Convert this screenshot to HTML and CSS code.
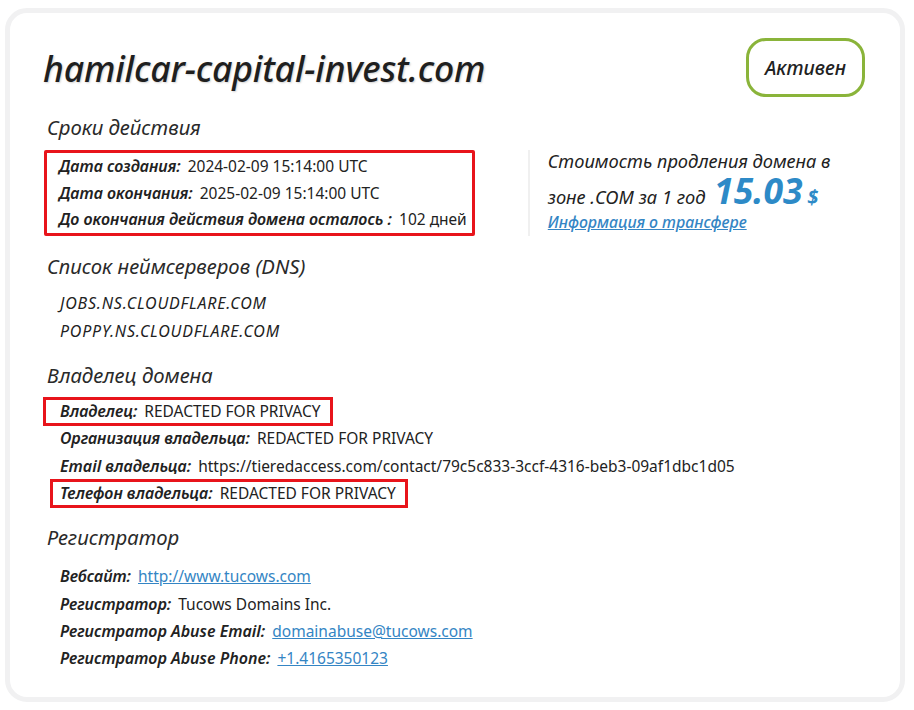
FILE: index.html
```html
<!DOCTYPE html>
<html lang="ru">
<head>
<meta charset="utf-8">
<title>hamilcar-capital-invest.com</title>
<link rel="stylesheet" href="styles.css">
</head>
<body>
<div class="card">
  <div class="header">
    <h1 class="domain">hamilcar-capital-invest.com</h1>
    <div class="badge">Активен</div>
  </div>

  <h2 class="section-title">Сроки действия</h2>
  <div class="terms">
    <div class="terms-box">
      <div class="row"><span class="label">Дата создания:</span><span class="value">2024-02-09 15:14:00 UTC</span></div>
      <div class="row"><span class="label">Дата окончания:</span><span class="value">2025-02-09 15:14:00 UTC</span></div>
      <div class="row"><span class="label">До окончания действия домена осталось :</span><span class="value">102 дней</span></div>
    </div>
    <div class="price">
      <div class="price-line first">Стоимость продления домена в</div>
      <div class="price-line second">зоне .COM за 1 год <span class="amount">15.03</span> <span class="currency">$</span></div>
      <a class="transfer" href="#">Информация о трансфере</a>
    </div>
  </div>

  <h2 class="section-title gap">Список неймсерверов (DNS)</h2>
  <div class="list">
    <div class="row ns">JOBS.NS.CLOUDFLARE.COM</div>
    <div class="row ns">POPPY.NS.CLOUDFLARE.COM</div>
  </div>

  <h2 class="section-title gap">Владелец домена</h2>
  <div class="list">
    <div class="row marked mark-a"><span class="label">Владелец:</span><span class="value">REDACTED FOR PRIVACY</span></div>
    <div class="row"><span class="label">Организация владельца:</span><span class="value">REDACTED FOR PRIVACY</span></div>
    <div class="row"><span class="label">Email владельца:</span><span class="value">https://tieredaccess.com/contact/79c5c833-3ccf-4316-beb3-09af1dbc1d05</span></div>
    <div class="row marked mark-b"><span class="label">Телефон владельца:</span><span class="value">REDACTED FOR PRIVACY</span></div>
  </div>

  <h2 class="section-title gap">Регистратор</h2>
  <div class="list registrar">
    <div class="row"><span class="label">Вебсайт:</span><a class="value link" href="#">http://www.tucows.com</a></div>
    <div class="row"><span class="label">Регистратор:</span><span class="value">Tucows Domains Inc.</span></div>
    <div class="row"><span class="label">Регистратор Abuse Email:</span><a class="value link" href="#">domainabuse@tucows.com</a></div>
    <div class="row"><span class="label">Регистратор Abuse Phone:</span><a class="value link" href="#">+1.4165350123</a></div>
  </div>
</div>
</body>
</html>
```

FILE: styles.css
```css
* { box-sizing: border-box; }

html, body {
  margin: 0;
  padding: 0;
  background: #ffffff;
}

body {
  padding: 8px 9px 8px 5px;
  font-family: "Noto Sans", "Open Sans", sans-serif;
  color: #222222;
}

.card {
  height: 694px;
  border: 5px solid #f1f1f2;
  border-radius: 22px;
  background: #ffffff;
  padding: 25px 35px 0 33px;
}

.header {
  display: flex;
  align-items: center;
  justify-content: space-between;
}

.domain {
  margin: 0;
  font-family: "Noto Sans", sans-serif;
  font-style: italic;
  font-weight: 500;
  font-size: 35.6px;
  color: #1f1f1f;
  text-shadow: 1px 1px 2px rgba(0, 0, 0, 0.18);
  letter-spacing: -0.2px;
}

.badge {
  width: 119px;
  height: 59px;
  border: 3px solid #8ab43a;
  border-radius: 20px;
  display: flex;
  align-items: center;
  justify-content: center;
  font-style: italic;
  font-weight: 500;
  font-size: 19.5px;
  color: #222222;
}

.section-title {
  margin: 16px 0 0 4px;
  font-style: italic;
  font-weight: 400;
  font-size: 20.3px;
  line-height: 28px;
  color: #2a2a2a;
}

.section-title.gap {
  margin-top: 16px;
}

.terms {
  display: flex;
  align-items: stretch;
  margin-top: 9px;
}

.terms-box {
  margin-left: 1px;
  border: 3px solid #e8141b;
  border-radius: 2px;
  padding: 0 5px 0 12px;
}

.row {
  display: flex;
  align-items: baseline;
  gap: 7px;
  height: 27.3px;
  line-height: 27.3px;
  white-space: nowrap;
}

.terms-box .row {
  height: 26.7px;
  line-height: 26.7px;
}

.label {
  font-style: italic;
  font-weight: 600;
  font-size: 16px;
  color: #222222;
}

.value {
  font-size: 15.5px;
  color: #222222;
}

.link {
  color: #3485c4;
  text-decoration: underline;
}

.price {
  margin-left: 53px;
  border-left: 2px solid #f0f0f0;
  padding-left: 18px;
}

.price-line {
  font-style: italic;
  font-size: 18.3px;
  line-height: 34px;
  color: #222222;
}

.price-line.first {
  line-height: 22px;
}

.price-line.second {
  margin-top: 3px;
}

.amount {
  font-style: italic;
  font-weight: 700;
  font-size: 35.5px;
  line-height: 30px;
  color: #2d8ac7;
  margin-left: 4px;
}

.currency {
  font-style: italic;
  font-weight: 700;
  font-size: 20px;
  line-height: 20px;
  color: #2d8ac7;
}

.transfer {
  display: block;
  margin-top: -3px;
  font-style: italic;
  font-weight: 500;
  font-size: 15.9px;
  line-height: 22px;
  color: #3485c4;
  text-decoration: underline;
}

.list {
  margin-top: 9px;
}

.list.registrar {
  margin-top: 12px;
}

.list .row {
  padding-left: 17px;
}

.ns {
  font-style: italic;
  font-size: 16px;
  letter-spacing: 0.8px;
}

.list .ns {
  height: 28px;
  line-height: 28px;
}

.marked {
  width: fit-content;
  outline: 3px solid #e8141b;
  outline-offset: -2px;
}

.list .mark-a {
  margin-left: 1px;
  padding-left: 16px;
  padding-right: 11px;
}

.list .mark-b {
  margin-left: 8px;
  padding-left: 9px;
  padding-right: 11px;
}
```
